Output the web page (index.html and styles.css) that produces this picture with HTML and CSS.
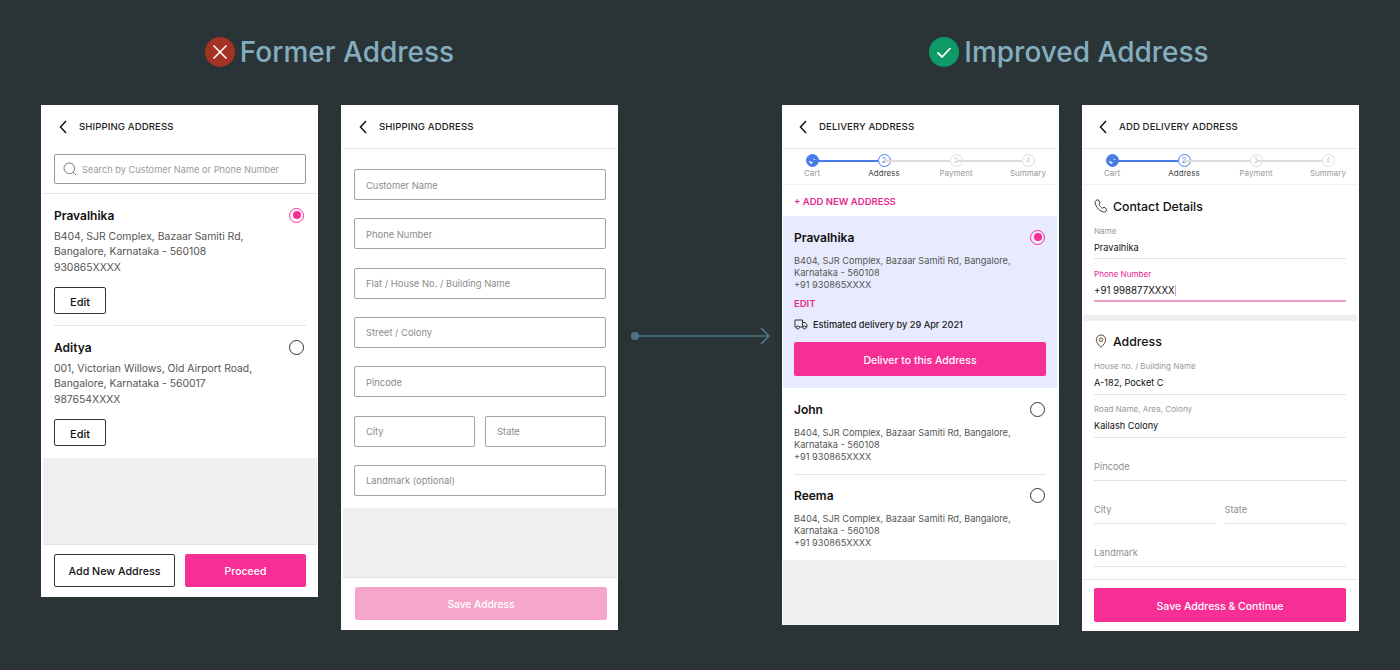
FILE: index.html
```html
<!DOCTYPE html>
<html lang="en">
<head>
<meta charset="utf-8">
<title>Address redesign</title>
<link rel="stylesheet" href="styles.css">
</head>
<body>
<main class="board">
  <section class="group">
    <h1 class="title">
      <svg class="title-icon" viewBox="0 0 30 30"><circle cx="15" cy="15" r="15" fill="#a33424"/><path d="M8.5 8.5l13 13M21.5 8.5l-13 13" stroke="#fff" stroke-width="1.5" fill="none"/></svg>
      Former Address
    </h1>
    <div class="phones">
      <article class="phone h-492">
        <header class="bar"><svg class="back" viewBox="0 0 8 14"><path d="M7 1L1.5 7 7 13" fill="none" stroke="#111" stroke-width="1.5"/></svg><span>SHIPPING ADDRESS</span></header>
        <div class="search-wrap">
          <div class="search">
            <svg class="search-icon" viewBox="0 0 14 14"><circle cx="6.3" cy="6.3" r="5.3" fill="none" stroke="#777" stroke-width="1"/><path d="M10.2 10.2l3 3" stroke="#777" stroke-width="1"/></svg>
            <span>Search by Customer Name or Phone Number</span>
          </div>
        </div>
        <div class="card">
          <div class="card-head"><span class="name">Pravalhika</span><span class="radio on"></span></div>
          <p class="addr">B404, SJR Complex, Bazaar Samiti Rd,<br>Bangalore, Karnataka - 560108<br>930865XXXX</p>
          <button class="edit">Edit</button>
        </div>
        <div class="rule-wrap"><hr class="rule"></div>
        <div class="card">
          <div class="card-head"><span class="name">Aditya</span><span class="radio"></span></div>
          <p class="addr">001, Victorian Willows, Old Airport Road,<br>Bangalore, Karnataka - 560017<br>987654XXXX</p>
          <button class="edit">Edit</button>
        </div>
        <div class="fill"></div>
        <footer class="foot-two">
          <button class="btn-outline">Add New Address</button>
          <button class="btn-pink">Proceed</button>
        </footer>
      </article>

      <article class="phone h-525">
        <header class="bar lined"><svg class="back" viewBox="0 0 8 14"><path d="M7 1L1.5 7 7 13" fill="none" stroke="#111" stroke-width="1.5"/></svg><span>SHIPPING ADDRESS</span></header>
        <form class="boxes">
          <div class="box">Customer Name</div>
          <div class="box">Phone Number</div>
          <div class="box">Flat / House No. / Building Name</div>
          <div class="box">Street / Colony</div>
          <div class="box">Pincode</div>
          <div class="box-row"><div class="box">City</div><div class="box">State</div></div>
          <div class="box">Landmark (optional)</div>
        </form>
        <div class="fill"></div>
        <footer class="foot-save"><button class="btn-pink faded">Save Address</button></footer>
      </article>
    </div>
  </section>

  <svg class="arrow" viewBox="0 0 141 20"><circle cx="5" cy="10" r="4" fill="#4b7686"/><path d="M5 10h134M131 2l8 8-8 8" fill="none" stroke="#4b7686" stroke-width="1.6"/></svg>

  <section class="group improved">
    <h1 class="title">
      <svg class="title-icon" viewBox="0 0 30 30"><circle cx="15" cy="15" r="15" fill="#0e9a67"/><path d="M8.5 15.5l4.5 4.5 8.5-9" stroke="#fff" stroke-width="1.8" fill="none"/></svg>
      Improved Address
    </h1>
    <div class="phones">
      <article class="phone h-520">
        <header class="bar lined"><svg class="back" viewBox="0 0 8 14"><path d="M7 1L1.5 7 7 13" fill="none" stroke="#111" stroke-width="1.5"/></svg><span>DELIVERY ADDRESS</span></header>
        <div class="stepper">
          <div class="step done"><span class="dot"><svg viewBox="0 0 8 8"><path d="M1.2 4.2l2 2 3.6-4" fill="none" stroke="#fff" stroke-width="1.2"/></svg></span><span class="step-label">Cart</span></div>
          <div class="step current"><span class="dot">2</span><span class="step-label">Address</span></div>
          <div class="step"><span class="dot">3</span><span class="step-label">Payment</span></div>
          <div class="step"><span class="dot">4</span><span class="step-label">Summary</span></div>
        </div>
        <div class="add-new">+ ADD NEW ADDRESS</div>
        <div class="selected">
          <div class="card-head"><span class="name">Pravalhika</span><span class="radio on"></span></div>
          <p class="addr-sm">B404, SJR Complex, Bazaar Samiti Rd, Bangalore,<br>Karnataka - 560108<br>+91 930865XXXX</p>
          <div class="edit-link">EDIT</div>
          <div class="eta">
            <svg class="truck" viewBox="0 0 14 12"><path d="M1 2h7.5v7H1zM8.500 4.500h2.700L13 7v2H8.500" fill="none" stroke="#333" stroke-width="1"/><circle cx="3.800" cy="9.500" r="1.500" fill="#e7ebfd" stroke="#333"/><circle cx="10.500" cy="9.500" r="1.500" fill="#e7ebfd" stroke="#333"/></svg>
            <span>Estimated delivery by 29 Apr 2021</span>
          </div>
          <button class="btn-pink tall">Deliver to this Address</button>
        </div>
        <div class="card-sm first">
          <div class="card-head"><span class="name">John</span><span class="radio"></span></div>
          <p class="addr-sm">B404, SJR Complex, Bazaar Samiti Rd, Bangalore,<br>Karnataka - 560108<br>+91 930865XXXX</p>
        </div>
        <div class="rule-wrap"><hr class="rule"></div>
        <div class="card-sm">
          <div class="card-head"><span class="name">Reema</span><span class="radio"></span></div>
          <p class="addr-sm">B404, SJR Complex, Bazaar Samiti Rd, Bangalore,<br>Karnataka - 560108<br>+91 930865XXXX</p>
        </div>
        <div class="fill"></div>
      </article>

      <article class="phone h-526">
        <header class="bar lined"><svg class="back" viewBox="0 0 8 14"><path d="M7 1L1.5 7 7 13" fill="none" stroke="#111" stroke-width="1.5"/></svg><span>ADD DELIVERY ADDRESS</span></header>
        <div class="stepper">
          <div class="step done"><span class="dot"><svg viewBox="0 0 8 8"><path d="M1.2 4.2l2 2 3.6-4" fill="none" stroke="#fff" stroke-width="1.2"/></svg></span><span class="step-label">Cart</span></div>
          <div class="step current"><span class="dot">2</span><span class="step-label">Address</span></div>
          <div class="step"><span class="dot">3</span><span class="step-label">Payment</span></div>
          <div class="step"><span class="dot">4</span><span class="step-label">Summary</span></div>
        </div>
        <div class="contact">
          <h2 class="sub">
            <svg class="sub-icon" viewBox="0 0 14 14"><path d="M2.600 1.200l1.700-.4 1.900 3.300-1.300 1.200c.6 1.700 2 3.200 3.800 4l1.300-1.200 2.700 2.100-.5 1.700c-.3.800-1.100 1.200-1.900 1.100C5.800 12.500 1.800 8.300 1.100 3.400c-.1-.9.500-1.800 1.500-2.200z" fill="none" stroke="#3a3a3a" stroke-width="1"/></svg>
            Contact Details
          </h2>
          <div class="field first"><label class="cap">Name</label><div class="val">Pravalhika</div></div>
          <div class="field active"><label class="cap">Phone Number</label><div class="val"><span class="caret">+91 998877XXXX</span></div></div>
        </div>
        <div class="band"></div>
        <div class="address">
          <h2 class="sub">
            <svg class="sub-icon" viewBox="0 0 14 14"><path d="M7 13.300C4.500 10.800 2.300 8.300 2.300 5.700a4.700 4.700 0 0 1 9.400 0c0 2.600-2.200 5.100-4.700 7.600z" fill="none" stroke="#5a4a32" stroke-width="1"/><circle cx="7" cy="5.700" r="1.800" fill="none" stroke="#5a4a32" stroke-width="1"/></svg>
            Address
          </h2>
          <div class="field first"><label class="cap">House no. / Building Name</label><div class="val">A-182, Pocket C</div></div>
          <div class="field"><label class="cap">Road Name, Area, Colony</label><div class="val">Kailash Colony</div></div>
          <div class="empty">Pincode</div>
          <div class="empty-row"><div class="empty">City</div><div class="empty">State</div></div>
          <div class="empty">Landmark</div>
        </div>
        <div class="fill-white"></div>
        <footer class="foot-continue"><button class="btn-pink tall">Save Address &amp; Continue</button></footer>
      </article>
    </div>
  </section>
</main>
</body>
</html>
```
FILE: styles.css
```css
* { box-sizing: border-box; }
html, body { margin: 0; height: 100%; }
body {
  background: #2a3437;
  font-family: "Inter", "Liberation Sans", sans-serif;
  color: #111;
  overflow: hidden;
}
.board { display: flex; align-items: flex-start; padding-left: 41px; }
.group { display: flex; flex-direction: column; }
.title {
  height: 105px;
  margin: 0;
  padding-bottom: 1px;
  display: flex;
  align-items: center;
  justify-content: center;
  gap: 5px;
  font-size: 28px;
  font-weight: 500;
  color: #84aebf;
}
.improved .title { padding-right: 3px; }
.title-icon { width: 30px; height: 30px; flex: none; }
.phones { display: flex; gap: 23px; align-items: flex-start; }
.arrow { width: 141px; height: 20px; margin: 326px 11px 0 12px; flex: none; }
.phone {
  width: 277px;
  background: #fff;
  border-left: 2px solid #fff;
  border-right: 1px solid #fff;
  display: flex;
  flex-direction: column;
}
.improved .phone { border-left-width: 1px; border-right-width: 2px; }
.h-492 { height: 492px; }
.h-525 { height: 525px; }
.h-520 { height: 520px; }
.h-526 { height: 526px; }

.bar {
  height: 43px;
  flex: none;
  display: flex;
  align-items: center;
  gap: 12px;
  padding-left: 16px;
  font-size: 9.6px;
  font-weight: 500;
  letter-spacing: .1px;
  color: #222;
}
.bar.lined { height: 44px; border-bottom: 1px solid #e2e2e2; }
.back { width: 8px; height: 14px; flex: none; }

.search-wrap { padding: 6px 11px 9px; border-bottom: 1px solid #e4e4e4; }
.search {
  height: 30px;
  border: 1px solid #9a9a9a;
  border-radius: 2px;
  display: flex;
  align-items: center;
  gap: 5px;
  padding-left: 8px;
  font-size: 9.25px;
  color: #9b9b9b;
}
.search-icon { width: 14px; height: 14px; flex: none; }

.card { padding: 12px 11px 11px; }
.card + .rule-wrap + .card { padding-bottom: 12px; }
.card-head { display: flex; justify-content: space-between; align-items: center; height: 18px; }
.name { font-size: 12px; font-weight: 600; color: #111; }
.radio {
  width: 15px; height: 15px;
  border: 1.5px solid #333;
  border-radius: 50%;
  flex: none;
  margin-right: 2px;
  display: flex; align-items: center; justify-content: center;
}
.improved .radio { margin-right: 1px; }
.radio.on { border-color: #f62e96; }
.radio.on::after { content: ""; width: 8px; height: 8px; border-radius: 50%; background: #f62e96; }
.addr { margin: 5px 0 12px; font-size: 10.4px; line-height: 15.34px; color: #555; }
.edit {
  display: block;
  width: 52px; height: 27px;
  padding: 2px 0 0;
  background: #fff;
  border: 1px solid #333;
  border-radius: 2px;
  font: 500 11px "Inter", "Liberation Sans", sans-serif;
  color: #111;
}
.rule-wrap { padding: 0 11px; }
.rule { margin: 0; border: 0; height: 1px; background: #e4e4e4; }
.fill { flex: 1; background: #efefef; }
.fill-white { flex: 1; }

.foot-two {
  height: 53px;
  flex: none;
  border-top: 1px solid #e4e4e4;
  padding: 9px 11px 10px;
  display: grid;
  grid-template-columns: 1fr 1fr;
  gap: 10px;
}
.btn-outline, .btn-pink {
  padding: 2px 0 0;
  border-radius: 2px;
  font: 500 10.5px "Inter", "Liberation Sans", sans-serif;
}
.btn-outline { background: #fff; border: 1px solid #333; color: #111; font-size: 10.7px; }
.btn-pink { background: #f62e96; border: 0; color: #fff; height: 33px; width: 100%; }
.btn-pink.tall { height: 34px; }
.btn-pink.faded { background: #f7a6cb; font-size: 10.2px; padding: 0; }

.boxes { padding: 20px 11px 12px; display: flex; flex-direction: column; gap: 18.33px; }
.box {
  height: 31px;
  border: 1px solid #a3a3a3;
  border-radius: 2px;
  padding: 1px 0 0 11px;
  display: flex;
  align-items: center;
  font-size: 9.4px;
  color: #8b8b8b;
}
.box-row { display: grid; grid-template-columns: 1fr 1fr; gap: 10px; }
.foot-save { border-top: 1px solid #e4e4e4; padding: 9px 10px 10px 12px; height: 53px; flex: none; }

.stepper {
  height: 36px;
  flex: none;
  display: flex;
  gap: 16px;
  padding-left: 1px;
  border-bottom: 1px solid #f1f1f1;
}
.step {
  position: relative;
  width: 56px;
  display: flex;
  flex-direction: column;
  align-items: center;
  padding-top: 5px;
}
.step + .step::before {
  content: "";
  position: absolute;
  top: 11px;
  left: -44px;
  width: 72px;
  height: 1.5px;
  background: #ddd;
}
.step.current::before { background: #4a7ce8; }
.dot {
  position: relative;
  width: 13px; height: 13px;
  border-radius: 50%;
  border: 1px solid #ddd;
  background: #fff;
  display: flex; align-items: center; justify-content: center;
  font-size: 7px;
  color: #ccc;
}
.dot svg { width: 8px; height: 8px; }
.done .dot { background: #4a7ce8; border-color: #4a7ce8; }
.current .dot { border-color: #4a7ce8; color: #4a7ce8; }
.step-label { font-size: 8px; line-height: 12px; color: #999; white-space: nowrap; }
.current .step-label { color: #444; }

.add-new {
  height: 31px;
  flex: none;
  padding: 1px 0 0 11px;
  display: flex;
  align-items: center;
  font-size: 9.5px;
  font-weight: 600;
  color: #e6288f;
}
.selected { background: #e7ebfd; padding: 12px 11px; flex: none; }
.addr-sm { margin: 9px 0 0; font-size: 9.2px; line-height: 12px; color: #555; }
.edit-link { margin-top: 6px; font-size: 9.5px; line-height: 14px; font-weight: 600; color: #e6288f; }
.eta { margin: 6px 0 11px; height: 14px; display: flex; align-items: center; gap: 5px; font-size: 9.2px; font-weight: 500; color: #222; }
.truck { width: 14px; height: 12px; flex: none; }
.card-sm { padding: 11px 11px 11px; }
.card-sm.first { padding-top: 12px; }

.contact { padding: 12px 11px 13px; flex: none; }
.address { padding: 11px 11px 12px; flex: none; }
.band { height: 6px; flex: none; background: #efefef; }
.sub {
  margin: 0;
  height: 18px;
  display: flex;
  align-items: center;
  gap: 5px;
  font-size: 12.3px;
  font-weight: 500;
  color: #111;
}
.sub-icon { width: 14px; height: 14px; flex: none; }
.field { margin-top: 9px; border-bottom: 1px solid #e2e2e2; padding-bottom: 3px; }
.field.first { margin-top: 10px; }
.address .field { padding-bottom: 4px; }
.address .field:not(.first) { margin-top: 8px; }
.field.active { border-bottom: 2px solid #ef9cc8; padding-bottom: 2px; }
.cap { display: block; font-size: 8.1px; line-height: 12px; color: #999; margin-bottom: 4px; }
.active .cap { color: #e6288f; }
.val { font-size: 9.2px; font-weight: 400; line-height: 14px; color: #111; }
.caret { border-right: 1px solid #ef9cc8; font-size: 9.7px; }
.empty {
  height: 43px;
  border-bottom: 1px solid #e2e2e2;
  padding-bottom: 6px;
  display: flex;
  align-items: flex-end;
  font-size: 9.3px;
  line-height: 14px;
  color: #8f8f8f;
}
.empty-row { display: grid; grid-template-columns: 1fr 1fr; gap: 9px; }
.foot-continue { border-top: 1px solid #e4e4e4; padding: 8px 11px 9px; flex: none; }
```
